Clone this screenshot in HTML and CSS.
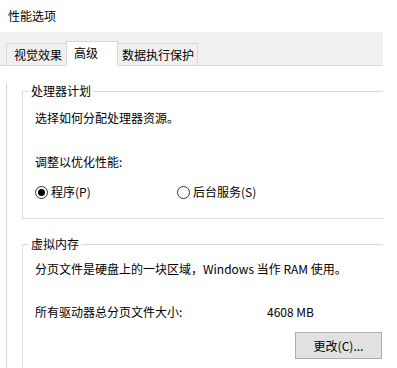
FILE: index.html
```html
<!DOCTYPE html>
<html lang="zh-CN">
<head>
<meta charset="utf-8">
<title>性能选项</title>
<link rel="stylesheet" href="styles.css">
</head>
<body>
<div class="dialog">
  <div class="title">性能选项</div>
  <div class="tabstrip">
    <div class="tab tab-first">视觉效果</div>
    <div class="tab tab-active">高级</div>
    <div class="tab tab-last">数据执行保护</div>
  </div>
  <div class="panel">
    <fieldset class="group group-cpu">
      <legend class="group-label">处理器计划</legend>
      <p class="line">选择如何分配处理器资源。</p>
      <p class="line line-gap">调整以优化性能:</p>
      <div class="radios">
        <label class="radio"><span class="radio-circle checked"><span class="radio-dot"></span></span><span>程序(P)</span></label>
        <label class="radio"><span class="radio-circle"></span><span>后台服务(S)</span></label>
      </div>
    </fieldset>
    <fieldset class="group group-mem">
      <legend class="group-label">虚拟内存</legend>
      <p class="line">分页文件是硬盘上的一块区域，Windows 当作 RAM 使用。</p>
      <div class="size-row">
        <span>所有驱动器总分页文件大小:</span>
        <span>4608 MB</span>
      </div>
      <div class="btn-row">
        <button class="btn" type="button">更改(C)...</button>
      </div>
    </fieldset>
  </div>
</div>
</body>
</html>
```

FILE: styles.css
```css
html, body {
  margin: 0;
  padding: 0;
  background: #ffffff;
}

body {
  font-family: "Noto Sans CJK SC", "Noto Sans", sans-serif;
  font-size: 12px;
  color: #000000;
  overflow: hidden;
}

.dialog {
  width: 383px;
}

.title {
  height: 32px;
  line-height: 32px;
  padding-left: 8px;
}

.tabstrip {
  box-sizing: border-box;
  height: 34px;
  background: #f0f0f0;
  border-bottom: 1px solid #d9d9d9;
  display: flex;
  align-items: flex-end;
  padding-left: 6px;
}

.tab {
  box-sizing: border-box;
  height: 22px;
  line-height: 21px;
  background: #f0f0f0;
  border-top: 1px solid #d9d9d9;
  white-space: nowrap;
}

.tab-first {
  border-left: 1px solid #d9d9d9;
  padding: 0 4px 0 7px;
  width: 60px;
}

.tab-active {
  height: 25px;
  line-height: 22px;
  margin-bottom: -1px;
  background: #ffffff;
  border-left: 1px solid #d9d9d9;
  border-right: 1px solid #d9d9d9;
  padding: 0 19px 2px 7px;
  width: 52px;
}

.tab-last {
  border-right: 1px solid #d9d9d9;
  padding: 0 3px 0 4px;
  width: 80px;
}

.panel {
  margin-left: 6px;
  border-left: 1px solid #d9d9d9;
  padding-left: 15px;
}

.group {
  margin: 0;
  border: 1px solid #dcdcdc;
  border-right: none;
  min-inline-size: 0;
}

.group-cpu {
  margin-top: 17px;
  padding: 11px 1px 18px 12px;
}

.group-mem {
  margin-top: 17px;
  padding: 9px 1px 12px 12px;
}

.group-label {
  margin-left: -6px;
  padding: 0 2px;
  line-height: 16px;
}

.line {
  margin: 0;
  line-height: 16px;
  white-space: nowrap;
}

.line-gap {
  margin-top: 28px;
}

.radios {
  margin-top: 14px;
  display: grid;
  grid-template-columns: 142px auto;
  line-height: 16px;
}

.radio {
  display: flex;
  align-items: center;
  gap: 3px;
}

.radio-circle {
  box-sizing: border-box;
  width: 13px;
  height: 13px;
  border: 1px solid #333333;
  border-radius: 50%;
  display: flex;
  align-items: center;
  justify-content: center;
}

.radio-dot {
  width: 7px;
  height: 7px;
  border-radius: 50%;
  background: #000000;
}

.size-row {
  margin-top: 27px;
  display: grid;
  grid-template-columns: 232px auto;
  line-height: 16px;
}

.btn-row {
  margin-top: 12px;
  display: flex;
  justify-content: flex-end;
}

.btn {
  box-sizing: border-box;
  width: 87px;
  height: 27px;
  margin: 0;
  padding: 0;
  background: #e1e1e1;
  border: 1px solid #adadad;
  font-family: "Noto Sans CJK SC", "Noto Sans", sans-serif;
  font-size: 12px;
  color: #000000;
}
```
